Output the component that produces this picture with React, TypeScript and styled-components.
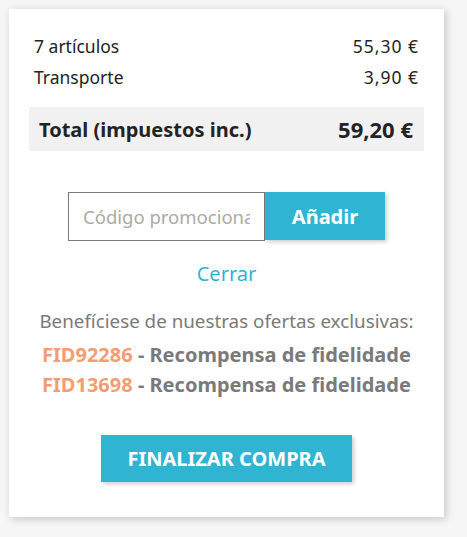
import * as React from 'react';
import styled, { createGlobalStyle } from 'styled-components';

const GlobalStyle = createGlobalStyle`
  html, body {
    margin: 0;
    padding: 0;
    background: #f6f6f6;
    font-family: 'Noto Sans', 'Open Sans', sans-serif;
  }
`;

const Page = styled.div`
  padding: 9px 23px 20px 9px;
`;

const Card = styled.section`
  width: 435px;
  box-sizing: border-box;
  background: #fff;
  box-shadow: 2px 2px 8px 0 rgba(0, 0, 0, 0.2);
  padding: 22px 20px 35px;
`;

const Line = styled.div`
  display: flex;
  justify-content: space-between;
  padding: 0 6px 0 5px;
  font-size: 17.5px;
  line-height: 31px;
  color: #232323;
`;

const Amount = styled.span`
  letter-spacing: 1px;
  margin-right: -1px;
`;

const TotalBar = styled.div`
  display: flex;
  justify-content: space-between;
  align-items: center;
  margin-top: 14px;
  height: 44px;
  padding: 0 11px 0 10px;
  background: #f1f1f1;
  color: #232323;
  font-weight: 700;
`;

const TotalLabel = styled.span`
  font-size: 20px;
`;

const TotalValue = styled.span`
  font-size: 22px;
`;

const PromoForm = styled.form`
  display: flex;
  justify-content: center;
  margin-top: 41px;
`;

const PromoInput = styled.input`
  width: 197px;
  height: 49px;
  box-sizing: border-box;
  border: 1px solid #7a7a7a;
  padding: 0 14px;
  font-family: inherit;
  font-size: 18.5px;
  color: #232323;
  outline: none;
  &::placeholder {
    color: #acaaa6;
  }
`;

const Button = styled.button<{ $wide?: boolean }>`
  border: 0;
  background: #2fb5d2;
  color: #fff;
  font-family: inherit;
  font-weight: 700;
  font-size: 20px;
  text-transform: ${(p) => (p.$wide ? 'uppercase' : 'none')};
  height: ${(p) => (p.$wide ? '47px' : '48px')};
  width: ${(p) => (p.$wide ? '251px' : '120px')};
  box-shadow: 2px 2px 4px 0 rgba(0, 0, 0, 0.2);
  cursor: pointer;
`;

const CloseLink = styled.a`
  display: block;
  text-align: center;
  margin-top: 20px;
  font-size: 20px;
  line-height: 26px;
  color: #2fb5d2;
  text-decoration: none;
`;

const Offers = styled.div`
  margin-top: 22px;
  text-align: center;
  color: #7a7a7a;
`;

const OffersTitle = styled.p`
  margin: 0 0 7px;
  font-size: 18.8px;
  line-height: 24px;
`;

const Offer = styled.p`
  margin: 0;
  font-size: 20px;
  line-height: 30px;
  font-weight: 700;
`;

const Code = styled.span`
  color: #f39d72;
`;

const Actions = styled.div`
  display: flex;
  justify-content: center;
  margin-top: 35px;
`;

const lines = [
  { label: '7 artículos', value: '55,30 €' },
  { label: 'Transporte', value: '3,90 €' },
];

const offers = ['FID92286', 'FID13698'];

export default function App() {
  return (
    <>
      <GlobalStyle />
      <Page>
        <Card>
          {lines.map((l) => (
            <Line key={l.label}>
              <span>{l.label}</span>
              <Amount>{l.value}</Amount>
            </Line>
          ))}
          <TotalBar>
            <TotalLabel>Total (impuestos inc.)</TotalLabel>
            <TotalValue>59,20 €</TotalValue>
          </TotalBar>
          <PromoForm onSubmit={(e) => e.preventDefault()}>
            <PromoInput placeholder="Código promocional" />
            <Button type="submit">Añadir</Button>
          </PromoForm>
          <CloseLink href="#">Cerrar</CloseLink>
          <Offers>
            <OffersTitle>Benefíciese de nuestras ofertas exclusivas:</OffersTitle>
            {offers.map((c) => (
              <Offer key={c}>
                <Code>{c}</Code> - Recompensa de fidelidade
              </Offer>
            ))}
          </Offers>
          <Actions>
            <Button $wide type="button">Finalizar compra</Button>
          </Actions>
        </Card>
      </Page>
    </>
  );
}
